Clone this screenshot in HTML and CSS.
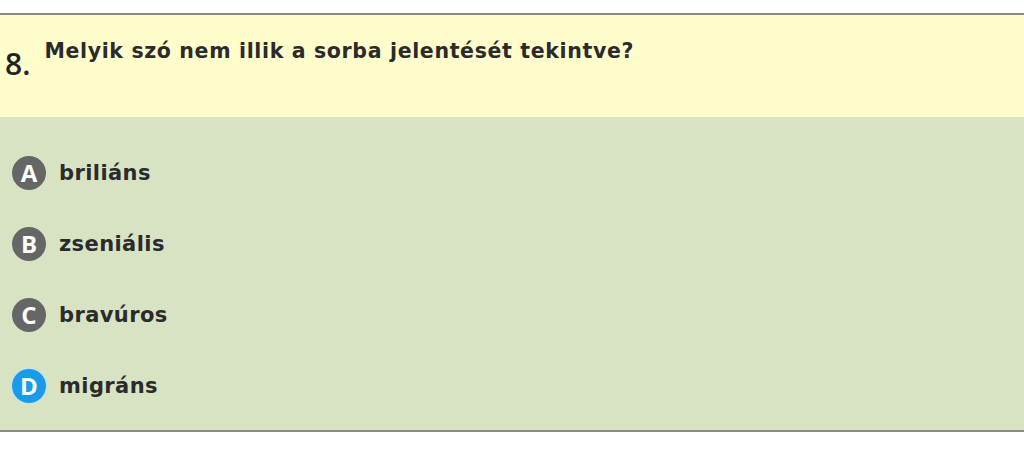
FILE: index.html
```html
<!DOCTYPE html>
<html lang="hu">
<head>
<meta charset="utf-8">
<link rel="stylesheet" href="styles.css">
</head>
<body>
<div class="quiz">
  <div class="question">
    <span class="num">8.</span>
    <span class="qtext">Melyik szó nem illik a sorba jelentését tekintve?</span>
  </div>
  <div class="answers">
    <div class="answer"><span class="badge">A</span><span class="label">briliáns</span></div>
    <div class="answer"><span class="badge">B</span><span class="label">zseniális</span></div>
    <div class="answer"><span class="badge">C</span><span class="label">bravúros</span></div>
    <div class="answer"><span class="badge selected">D</span><span class="label">migráns</span></div>
  </div>
</div>
</body>
</html>
```

FILE: styles.css
```css
html, body {
  margin: 0;
  padding: 0;
  background: #ffffff;
}
body {
  padding-top: 13px;
  font-family: "DejaVu Sans", Verdana, sans-serif;
}
.quiz {
  border-top: 2px solid #8a8a80;
  border-bottom: 2px solid #8a8a80;
}
.question {
  background: #fffdcc;
  height: 102px;
  display: flex;
  align-items: flex-start;
  box-sizing: border-box;
  padding: 24px 0 0 5px;
}
.num {
  font-family: "Open Sans", sans-serif;
  font-weight: 600;
  font-size: 30px;
  color: #222;
  margin-top: 10px;
  line-height: 1;
}
.qtext {
  font-size: 20.5px;
  font-weight: bold;
  letter-spacing: 0.65px;
  color: #2b2b2b;
  margin-left: 14px;
  line-height: 1.2;
}
.answers {
  background: #d8e3c4;
  padding: 39px 0 28px 12px;
  display: flex;
  flex-direction: column;
  gap: 38px;
}
.answer {
  display: flex;
  align-items: center;
  height: 33px;
}
.badge {
  width: 34px;
  height: 34px;
  border-radius: 50%;
  background: #666666;
  color: #fff;
  font-family: "Open Sans", sans-serif;
  font-weight: bold;
  font-size: 24px;
  display: flex;
  align-items: center;
  justify-content: center;
  flex: none;
}
.badge.selected {
  background: #1a9be8;
  box-shadow: 0 0 0 1px #bfe3f5;
}
.label {
  margin-left: 13px;
  font-size: 21px;
  font-weight: bold;
  letter-spacing: 0.4px;
  color: #2b2b2b;
}
```
